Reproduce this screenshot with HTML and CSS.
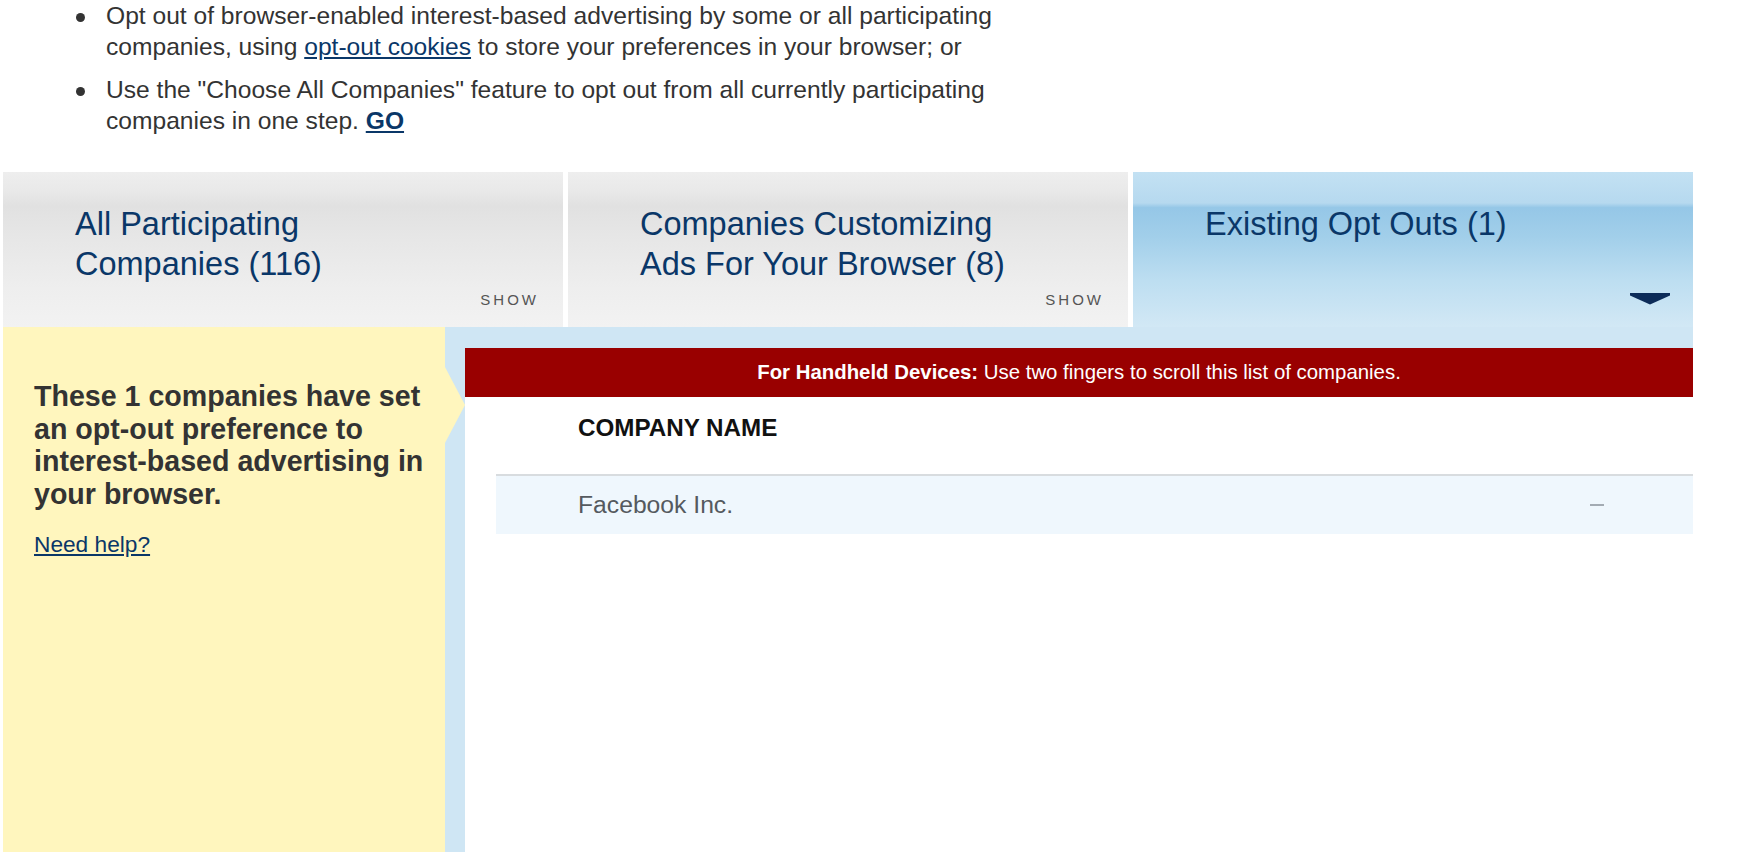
FILE: index.html
```html
<!DOCTYPE html>
<html lang="en">
<head>
    <meta charset="UTF-8">
    <meta name="viewport" content="width=device-width, initial-scale=1.0">
    <title>Opt Out From Online Behavioral Advertising</title>
    <link rel="stylesheet" href="styles.css">
</head>
<body>
    <ul class="options">
        <li>Opt out of browser-enabled interest-based advertising by some or all participating companies, using <a href="#">opt-out cookies</a> to store your preferences in your browser; or</li>
        <li>Use the "Choose All Companies" feature to opt out from all currently participating companies in one step. <a href="#" class="go">GO</a></li>
    </ul>

    <div class="optout">
        <div class="tabs">
            <div class="tab">
                <h3 class="tab-title">All Participating Companies (116)</h3>
                <span class="tab-show">SHOW</span>
            </div>
            <div class="tab">
                <h3 class="tab-title">Companies Customizing Ads For Your Browser (8)</h3>
                <span class="tab-show">SHOW</span>
            </div>
            <div class="tab active">
                <h3 class="tab-title">Existing Opt Outs (1)</h3>
                <svg class="tab-arrow" width="40" height="12" viewBox="0 0 40 12">
                    <path d="M0 0 H40 V2.5 L20 11.5 L0 2.5 Z" fill="#0c2b58"/>
                </svg>
            </div>
        </div>

        <div class="panel">
            <div class="summary">
                <h2>These 1 companies have set an opt-out preference to interest-based advertising in your browser.</h2>
                <p><a href="#">Need help?</a></p>
            </div>
            <div class="results">
                <div class="notice"><strong>For Handheld Devices:</strong> Use two fingers to scroll this list of companies.</div>
                <div class="company-list">
                    <div class="list-head">COMPANY NAME</div>
                    <div class="company-row">
                        <span>Facebook Inc.</span>
                        <span class="remove"></span>
                    </div>
                </div>
            </div>
        </div>
    </div>
</body>
</html>
```

FILE: styles.css
```css
/* General Reset */
* {
    box-sizing: border-box;
}

body {
    margin: 0;
    font-family: 'Liberation Sans', Arial, sans-serif;
    background-color: #fff;
    color: #333;
    overflow: hidden;
}

a {
    color: #0a3768;
}

/* Intro bullets */
.options {
    margin: 1px 0 0 0;
    padding-left: 106px;
    width: 1030px;
    list-style: none;
    font-size: 24.6px;
    line-height: 30.5px;
}

.options li::before {
    content: "";
    display: inline-block;
    width: 9px;
    height: 9px;
    margin-left: -30px;
    margin-right: 21px;
    border-radius: 50%;
    background-color: #333;
    vertical-align: middle;
}

.options li + li {
    margin-top: 13px;
}

.options .go {
    font-weight: bold;
}

/* Opt out module */
.optout {
    margin: 36px 0 0 3px;
    width: 1690px;
}

.tabs {
    display: grid;
    grid-template-columns: repeat(3, 1fr);
    gap: 5px;
}

.tab {
    height: 155px;
    padding: 32px 24px 18px 72px;
    display: flex;
    flex-direction: column;
    background: linear-gradient(to bottom, #eeeeee 0%, #e9e9e9 12%, #e1e1e1 22%, #e6e6e6 40%, #eeeeee 75%, #f2f2f2 100%);
}

.tab.active {
    background: linear-gradient(to bottom, #c3e1f3 0%, #b6d9ef 20%, #95c7e7 23%, #a2cfea 42%, #bddef1 70%, #d2e8f5 100%);
}

.tab-title {
    margin: 0;
    max-width: 385px;
    font-size: 32.5px;
    font-weight: normal;
    line-height: 40px;
    color: #0a3768;
}

.tab-show {
    margin-top: auto;
    align-self: flex-end;
    font-size: 15px;
    line-height: 18px;
    letter-spacing: 3px;
    color: #555;
}

.tab-arrow {
    display: block;
    margin-top: auto;
    margin-bottom: 4px;
    margin-right: -1px;
    align-self: flex-end;
}

/* Panel below tabs */
.panel {
    display: grid;
    grid-template-columns: 442px 1fr;
    min-height: 540px;
}

.summary {
    position: relative;
    background-color: #fff6be;
    padding: 53px 12px 0 31px;
}

/* little pointer into the list */
.summary::after {
    content: "";
    position: absolute;
    top: 40px;
    right: -20px;
    border-left: 20px solid #fff6be;
    border-top: 38px solid transparent;
    border-bottom: 38px solid transparent;
}

.summary h2 {
    margin: 0;
    font-size: 28.6px;
    line-height: 32.7px;
    color: #333;
}

.summary p {
    margin: 20px 0 0;
    font-size: 22.7px;
    line-height: 27px;
}

.results {
    background-color: #cfe6f4;
    padding: 21px 0 0 20px;
    display: flex;
    flex-direction: column;
}

.notice {
    height: 49px;
    line-height: 49px;
    background-color: #990000;
    color: #fff;
    text-align: center;
    font-size: 20.4px;
}

.company-list {
    flex: 1;
    background-color: #fff;
    padding-left: 31px;
}

.list-head {
    padding: 17px 0 32px 82px;
    font-size: 24.2px;
    font-weight: bold;
    line-height: 28px;
    color: #111;
}

.company-row {
    display: flex;
    justify-content: space-between;
    align-items: center;
    padding: 14px 89px 14px 82px;
    border-top: 2px solid #d8dcdf;
    background-color: #eff7fd;
    font-size: 24.7px;
    line-height: 30px;
    color: #555a5f;
}

.remove {
    width: 14px;
    height: 2px;
    background-color: #a3abb3;
}
```
